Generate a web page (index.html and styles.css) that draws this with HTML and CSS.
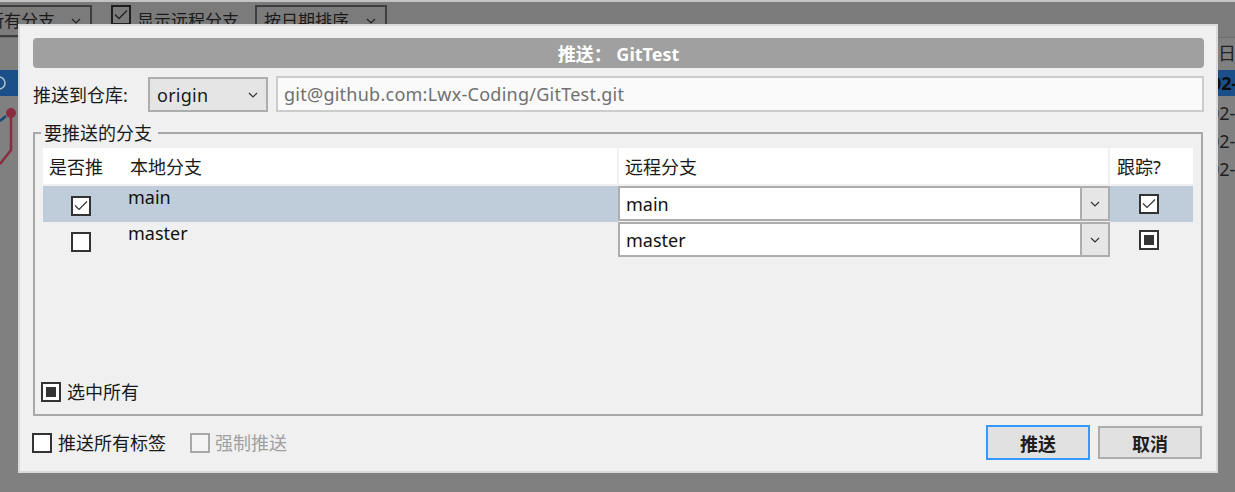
FILE: index.html
```html
<!DOCTYPE html>
<html lang="zh-CN">
<head>
<meta charset="utf-8">
<title>推送</title>
<link rel="stylesheet" href="styles.css">
</head>
<body>
<div class="app">
  <div class="toolbar">
    <div class="tb-select tb-branch"><span>所有分支</span><svg class="chev" width="10" height="6" viewBox="0 0 10 6"><path d="M1 1 L5 5 L9 1" fill="none" stroke="#222" stroke-width="1.2"/></svg></div>
    <div class="tb-check"><span class="tb-box"><svg width="16" height="16" viewBox="0 0 16 16"><path d="M2 7.5 L6 11.5 L14 3.5" fill="none" stroke="#222" stroke-width="1.3"/></svg></span><span class="tb-text">显示远程分支</span></div>
    <div class="tb-select tb-sort"><span>按日期排序</span><svg class="chev" width="10" height="6" viewBox="0 0 10 6"><path d="M1 1 L5 5 L9 1" fill="none" stroke="#222" stroke-width="1.2"/></svg></div>
  </div>
  <div class="main">
    <div class="graph-col">
      <svg width="18" height="454" viewBox="0 0 18 454">
        <rect x="0" y="32" width="18" height="26" fill="#1b4f8a"/>
        <circle cx="-1" cy="45" r="6" fill="none" stroke="#b8c2cc" stroke-width="1.5"/>
        <path d="M6 78 L0 83" stroke="#1c4677" stroke-width="2.5" fill="none"/>
        <path d="M11 75 L11 112 L0 126" stroke="#8b2d40" stroke-width="2.5" fill="none"/>
        <circle cx="11" cy="75" r="5" fill="#8b2d40"/>
      </svg>
    </div>
    <div class="list-col"></div>
    <div class="date-col">
      <div class="date-head">日期</div>
      <div class="date-sel">02-28 13:25</div>
      <div class="date-list">
        <div class="date-row">02-27 18:02</div>
        <div class="date-row">02-27 17:40</div>
        <div class="date-row">02-26 09:13</div>
      </div>
    </div>
  </div>

  <div class="dialog">
    <div class="title">推送： GitTest</div>
    <div class="repo-row">
      <div class="repo-label">推送到仓库:</div>
      <div class="repo-select"><span class="latin">origin</span><svg class="chev" width="10" height="6" viewBox="0 0 10 6"><path d="M1 1 L5 5 L9 1" fill="none" stroke="#333" stroke-width="1.2"/></svg></div>
      <div class="repo-url latin">git@github.com:Lwx-Coding/GitTest.git</div>
    </div>
    <div class="group">
      <span class="legend">要推送的分支</span>
      <div class="grid">
        <div class="grid-head">
          <div class="hcell h-local"><span class="h-push">是否推</span><span>本地分支</span></div>
          <div class="hcell h-remote">远程分支</div>
          <div class="hcell h-track">跟踪?</div>
        </div>
        <div class="grid-row selected">
          <div class="c-push"><span class="cb"><svg width="16" height="16" viewBox="0 0 16 16"><path d="M2 7.5 L6 11.5 L14 3.5" fill="none" stroke="#333" stroke-width="1.2"/></svg></span></div>
          <div class="c-local">main</div>
          <div class="c-remote"><div class="combo"><span class="combo-text">main</span><span class="combo-btn"><svg width="10" height="6" viewBox="0 0 10 6"><path d="M1 1 L5 5 L9 1" fill="none" stroke="#333" stroke-width="1.2"/></svg></span></div></div>
          <div class="c-track"><span class="cb"><svg width="16" height="16" viewBox="0 0 16 16"><path d="M2 7.5 L6 11.5 L14 3.5" fill="none" stroke="#333" stroke-width="1.2"/></svg></span></div>
        </div>
        <div class="grid-row">
          <div class="c-push"><span class="cb"></span></div>
          <div class="c-local">master</div>
          <div class="c-remote"><div class="combo"><span class="combo-text">master</span><span class="combo-btn"><svg width="10" height="6" viewBox="0 0 10 6"><path d="M1 1 L5 5 L9 1" fill="none" stroke="#333" stroke-width="1.2"/></svg></span></div></div>
          <div class="c-track"><span class="cb ind"></span></div>
        </div>
      </div>
      <div class="select-all"><span class="cb ind"></span><span>选中所有</span></div>
    </div>
    <div class="bottom-row">
      <div class="check tags"><span class="cb"></span><span>推送所有标签</span></div>
      <div class="check force disabled"><span class="cb"></span><span>强制推送</span></div>
      <div class="spacer"></div>
      <button class="btn btn-primary">推送</button>
      <button class="btn">取消</button>
    </div>
  </div>
</div>
</body>
</html>
```

FILE: styles.css
```css
* { box-sizing: border-box; }

body {
  margin: 0;
  width: 1235px;
  height: 492px;
  overflow: hidden;
  background: #808080;
  font-family: "Noto Sans", "Noto Sans CJK SC", sans-serif;
  font-size: 18px;
  color: #1a1a1a;
}

.app {
  position: relative;
  width: 1235px;
  height: 492px;
  display: flex;
  flex-direction: column;
}

/* ---------- dimmed background app ---------- */
.toolbar {
  height: 38px;
  flex: none;
  border-top: 2px solid #c3c3c3;
  border-bottom: 1px solid #6e6e6e;
  background: #7b7b7b;
  padding-top: 3px;
  display: flex;
  align-items: flex-start;
  overflow: hidden;
  color: #1a1a1a;
  font-size: 17px;
}

.tb-select {
  height: 32px;
  border: 2px solid #3e3e3e;
  display: flex;
  align-items: center;
  justify-content: space-between;
  line-height: 22px;
}
.tb-branch { width: 116px; margin-left: -24px; padding: 0 9px 0 9px; }
.tb-sort { width: 132px; margin-left: 16px; padding: 0 9px 0 7px; }

.tb-check {
  display: flex;
  align-items: flex-start;
  margin-left: 19px;
  gap: 6px;
}
.tb-text { line-height: 32px; }
.tb-box {
  width: 20px;
  height: 20px;
  border: 2px solid #1e1e1e;
  display: flex;
}

.main { flex: 1; display: flex; }
.graph-col { width: 18px; flex: none; }
.graph-col svg { display: block; }
.list-col { flex: 1; }
.date-col { width: 40px; flex: none; overflow: hidden; white-space: nowrap; }
.date-head {
  height: 32px;
  line-height: 30px;
  padding-left: 23px;
  color: #222;
}
.date-sel {
  height: 26px;
  line-height: 26px;
  background: #1b4f8a;
  padding-left: 16px;
  font-weight: bold;
  color: #0d0d0d;
}
.date-list { padding-top: 3px; }
.date-row {
  height: 28px;
  line-height: 28px;
  padding-left: 14px;
  color: #1e1e1e;
}

/* ---------- dialog ---------- */
.dialog {
  position: absolute;
  left: 18px;
  top: 24px;
  width: 1200px;
  height: 449px;
  border: 2px solid #dadada;
  background: #f0f0f0;
  padding: 12px 12px 11px 13px;
  display: flex;
  flex-direction: column;
}

.title {
  height: 30px;
  flex: none;
  background: #a0a0a0;
  border-radius: 4px;
  color: #fff;
  font-weight: bold;
  display: flex;
  align-items: center;
  justify-content: center;
}

.repo-row {
  margin-top: 8px;
  height: 36px;
  flex: none;
  display: flex;
  align-items: center;
}
.repo-label { width: 115px; flex: none; }
.latin { letter-spacing: 0.25px; }
.repo-select {
  width: 120px;
  height: 35px;
  margin-top: 1px;
  flex: none;
  border: 2px solid #adadad;
  background: #e5e5e5;
  display: flex;
  align-items: center;
  justify-content: space-between;
  padding: 0 8px 0 7px;
}
.repo-url {
  margin-left: 8px;
  flex: 1;
  height: 36px;
  border: 2px solid #cccccc;
  background: #fafafa;
  color: #707070;
  padding-left: 6px;
  display: flex;
  align-items: center;
}

.group {
  position: relative;
  margin-top: 20px;
  margin-right: 1px;
  height: 284px;
  flex: none;
  border: 2px solid #a8a8a8;
  padding: 14px 8px 12px 8px;
  display: flex;
  flex-direction: column;
}
.legend {
  position: absolute;
  top: -12px;
  left: 6px;
  padding: 0 6px 0 3px;
  line-height: 22px;
  background: #f0f0f0;
}

.grid { flex: 1; }
.grid-head {
  display: flex;
  gap: 2px;
  height: 36px;
}
.hcell {
  background: #fff;
  display: flex;
  align-items: center;
}
.h-local { width: 574px; padding-left: 6px; }
.h-push { width: 81px; }
.h-remote { width: 489px; padding-left: 6px; }
.h-track { width: 83px; padding-left: 7px; }

.grid-row {
  display: flex;
  height: 36px;
}
.grid-head + .grid-row { margin-top: 2px; }

.c-push {
  width: 76px;
  display: flex;
  justify-content: center;
  align-items: center;
  padding-top: 4px;
}
.c-local {
  width: 499px;
  padding-left: 9px;
  line-height: 22px;
  color: #111;
}
.c-remote { width: 492px; }
.c-track {
  width: 83px;
  display: flex;
  align-items: center;
  padding-left: 29px;
}
.selected .c-push,
.selected .c-local,
.selected .c-track { background: #bfcddb; }

.combo {
  height: 35px;
  border: 2px solid #adadad;
  background: #fff;
  display: flex;
}
.combo-text {
  flex: 1;
  padding-left: 6px;
  display: flex;
  align-items: center;
  color: #111;
}
.combo-btn {
  width: 28px;
  border-left: 2px solid #adadad;
  background: #e6e6e6;
  display: flex;
  align-items: center;
  justify-content: center;
}

.cb {
  width: 20px;
  height: 20px;
  flex: none;
  border: 2px solid #333;
  background: #fff;
  display: flex;
}
.cb.ind { align-items: center; justify-content: center; }
.cb.ind::after {
  content: "";
  width: 10px;
  height: 10px;
  background: #333;
}

.select-all {
  display: flex;
  align-items: center;
  gap: 6px;
  height: 20px;
  margin-left: -2px;
  line-height: 22px;
}

.bottom-row {
  margin-top: 9px;
  height: 35px;
  flex: none;
  display: flex;
  align-items: center;
}
.check {
  display: flex;
  align-items: center;
  line-height: 22px;
}
.tags { margin-left: -1px; gap: 6px; }
.force { margin-left: 24px; gap: 5px; }
.disabled { color: #a0a0a0; }
.disabled .cb { border-color: #a8a8a8; background: #f4f4f4; }
.spacer { flex: 1; }

.btn {
  width: 104px;
  height: 33px;
  margin: 0;
  border: 2px solid #adadad;
  background: #e1e1e1;
  font-family: "Noto Sans", "Noto Sans CJK SC", sans-serif;
  font-size: 18px;
  font-weight: bold;
  color: #1e1e1e;
  padding: 0;
}
.btn-primary {
  height: 35px;
  border-color: #3399ff;
  margin-right: 8px;
}
.btn:last-child { margin-right: 2px; }
```
